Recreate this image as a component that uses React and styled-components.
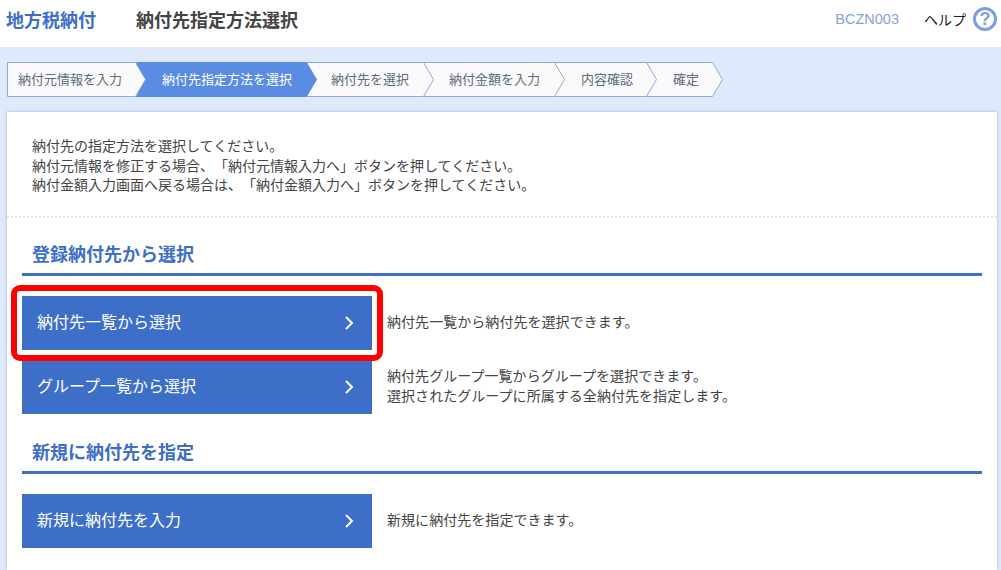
import styled, { createGlobalStyle } from 'styled-components';

const GlobalStyle = createGlobalStyle`
  html, body {
    margin: 0;
    padding: 0;
    height: 570px;
    overflow: hidden;
    background: #deeafc;
  }
  body {
    font-family: "Noto Sans CJK JP", "Liberation Sans", sans-serif;
    text-spacing-trim: space-all;
  }
  * {
    box-sizing: border-box;
  }
`;

const steps = [
  { label: '納付元情報を入力', width: 139, indent: 11 },
  { label: '納付先指定方法を選択', width: 181, indent: 26, active: true },
  { label: '納付先を選択', width: 127, indent: 24 },
  { label: '納付金額を入力', width: 141, indent: 25 },
  { label: '内容確認', width: 102, indent: 26 },
  { label: '確定', width: 76, indent: 26 },
];

function Step({ label, width, indent, active, first, order }) {
  const tip = width - 0.5;
  const base = width - 10.5;
  const outline = `M0.5 0.5H${base}L${tip} 17.5L${base} 34.5H0.5`;
  return (
    <StepItem $width={width} $indent={indent} $order={order}>
      <StepShape width={width} height="35" viewBox={`0 0 ${width} 35`}>
        <path d={`${outline}Z`} fill={active ? '#5b8ce4' : '#fafafa'} stroke="none" />
        <path
          d={first ? `${outline}Z` : `M0 0.5H${base}L${tip} 17.5L${base} 34.5H0`}
          fill="none"
          stroke={active ? '#5b8ce4' : '#8aaadb'}
        />
      </StepShape>
      <StepLabel $active={active}>{label}</StepLabel>
    </StepItem>
  );
}

function Chevron() {
  return (
    <ChevronIcon width="10" height="14" viewBox="0 0 10 14">
      <path d="M2 1L8 7L2 13" fill="none" stroke="#fff" strokeWidth="2" />
    </ChevronIcon>
  );
}

export default function App() {
  return (
    <Page>
      <GlobalStyle />
      <Header>
        <Brand>地方税納付</Brand>
        <PageTitle>納付先指定方法選択</PageTitle>
        <ScreenCode>BCZN003</ScreenCode>
        <HelpText>ヘルプ</HelpText>
        <HelpIcon>?</HelpIcon>
      </Header>

      <StepBar>
        {steps.map((s, i) => (
          <Step key={s.label} {...s} first={i === 0} order={steps.length - i} />
        ))}
      </StepBar>

      <Panel>
        <Intro>
          納付先の指定方法を選択してください。
          <br />
          納付元情報を修正する場合、「納付元情報入力へ」ボタンを押してください。
          <br />
          納付金額入力画面へ戻る場合は、「納付金額入力へ」ボタンを押してください。
        </Intro>

        <Section>
          <SectionTitle>登録納付先から選択</SectionTitle>
          <ActionRow $top={20}>
            <ActionButton>
              納付先一覧から選択
              <Chevron />
            </ActionButton>
            <ActionNote>納付先一覧から納付先を選択できます。</ActionNote>
            <Highlight />
          </ActionRow>
          <ActionRow $top={10}>
            <ActionButton>
              グループ一覧から選択
              <Chevron />
            </ActionButton>
            <ActionNote>
              納付先グループ一覧からグループを選択できます。
              <br />
              選択されたグループに所属する全納付先を指定します。
            </ActionNote>
          </ActionRow>
        </Section>

        <Section $top={2}>
          <SectionTitle>新規に納付先を指定</SectionTitle>
          <ActionRow $top={20}>
            <ActionButton>
              新規に納付先を入力
              <Chevron />
            </ActionButton>
            <ActionNote>新規に納付先を指定できます。</ActionNote>
          </ActionRow>
        </Section>
      </Panel>
    </Page>
  );
}

const Page = styled.div`
  width: 1001px;
  height: 570px;
  overflow: hidden;
  background: #deeafc;
`;

const Header = styled.header`
  display: flex;
  align-items: center;
  height: 47px;
  padding: 0 4px 9px 6px;
  background: #fff;
`;

const Brand = styled.div`
  width: 130px;
  font-size: 18px;
  line-height: 24px;
  margin-bottom: 1px;
  font-weight: 700;
  color: #3d6fc9;
`;

const PageTitle = styled.h1`
  flex: 1;
  margin: 0 0 1px;
  font-size: 18px;
  line-height: 24px;
  font-weight: 700;
  color: #444;
`;

const ScreenCode = styled.div`
  margin-right: 25px;
  font-family: "Liberation Sans", sans-serif;
  font-size: 14.5px;
  color: #86a3d8;
`;

const HelpText = styled.div`
  margin-right: 7px;
  font-size: 14px;
  color: #222;
`;

const HelpIcon = styled.div`
  display: flex;
  align-items: center;
  justify-content: center;
  width: 24px;
  height: 24px;
  border: 3px solid #7c9fe0;
  border-radius: 50%;
  font-family: "Liberation Sans", sans-serif;
  font-size: 18px;
  font-weight: 700;
  color: #7c9fe0;
`;

const StepBar = styled.nav`
  display: flex;
  padding: 15px 0 15px 7px;
`;

const StepItem = styled.div`
  position: relative;
  display: flex;
  align-items: center;
  width: ${(p) => p.$width}px;
  height: 35px;
  padding-left: ${(p) => p.$indent}px;
  margin-right: -10px;
  z-index: ${(p) => p.$order};
`;

const StepShape = styled.svg`
  position: absolute;
  top: 0;
  left: 0;
`;

const StepLabel = styled.span`
  position: relative;
  margin-bottom: 2px;
  font-size: 13px;
  white-space: nowrap;
  color: ${(p) => (p.$active ? '#fff' : '#5a6a80')};
`;

const Panel = styled.main`
  margin: 0 4px 0 7px;
  height: 458px;
  background: #fff;
  box-shadow: 0 0 3px rgba(90, 120, 170, 0.45);
`;

const Intro = styled.p`
  margin: 0;
  padding: 24px 24px 21px 25px;
  border-bottom: 2px dotted #e4e4e4;
  font-size: 14px;
  line-height: 19.6px;
  color: #444;
`;

const Section = styled.section`
  margin-top: ${(p) => p.$top || 0}px;
  padding: 0 15px;
`;

const SectionTitle = styled.h2`
  margin: 0;
  padding: 23px 0 8px 10px;
  border-bottom: 3px solid #3d6fc9;
  font-size: 18px;
  line-height: 24px;
  font-weight: 700;
  color: #3d6fc9;
`;

const ActionRow = styled.div`
  position: relative;
  display: flex;
  align-items: center;
  margin-top: ${(p) => p.$top}px;
`;

const Highlight = styled.div`
  position: absolute;
  top: -11px;
  left: -11px;
  width: 372px;
  height: 76px;
  border: 6px solid #f00;
  border-radius: 9px;
  z-index: 1;
`;

const ActionButton = styled.div`
  display: flex;
  align-items: center;
  justify-content: space-between;
  flex: 0 0 350px;
  height: 54px;
  padding: 0 18px 4px 15px;
  background: #3d6fc9;
  font-size: 16px;
  color: #fff;
`;

const ChevronIcon = styled.svg`
  display: block;
  margin-top: 4px;
`;

const ActionNote = styled.div`
  margin-left: 15px;
  padding-bottom: 4px;
  font-size: 14px;
  letter-spacing: 0.05px;
  line-height: 20px;
  color: #444;
`;
